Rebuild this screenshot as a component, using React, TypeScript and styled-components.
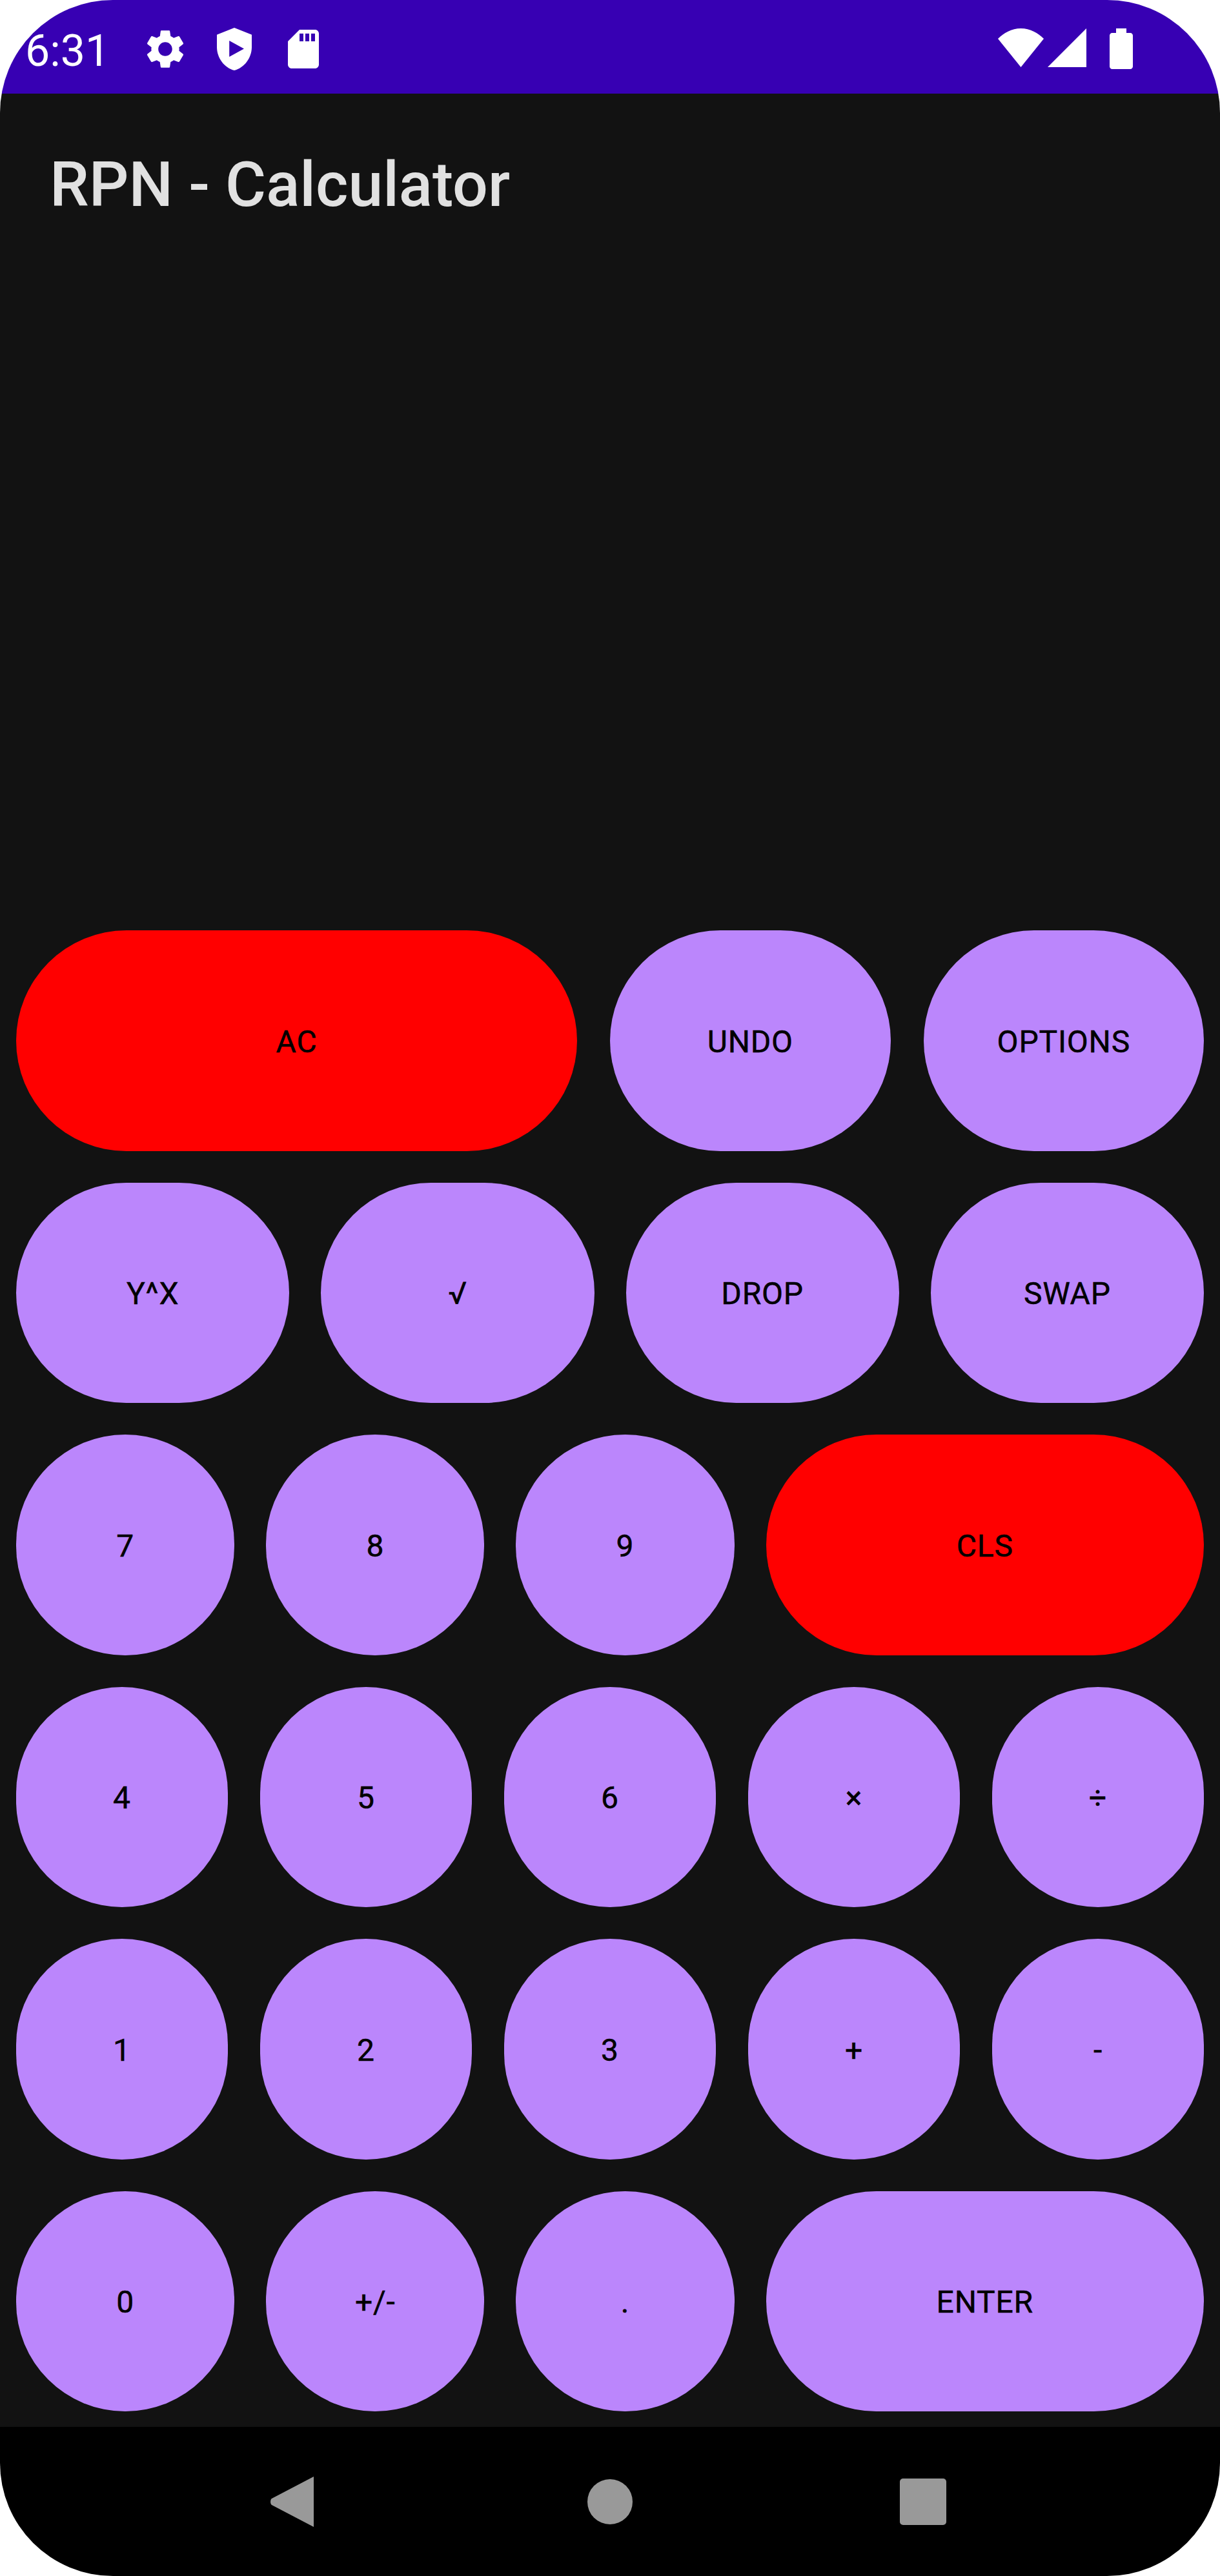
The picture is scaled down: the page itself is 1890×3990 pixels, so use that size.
import styled, { createGlobalStyle } from "styled-components";

type Key = {
  label: string;
  span?: number;
  danger?: boolean;
};

type Row = {
  gap: number;
  keys: Key[];
};

const ROWS: Row[] = [
  {
    gap: 51,
    keys: [{ label: "AC", span: 2, danger: true }, { label: "UNDO" }, { label: "OPTIONS" }],
  },
  {
    gap: 49,
    keys: [{ label: "Y^X" }, { label: "√" }, { label: "DROP" }, { label: "SWAP" }],
  },
  {
    gap: 49,
    keys: [{ label: "7" }, { label: "8" }, { label: "9" }, { label: "CLS", span: 2.006, danger: true }],
  },
  {
    gap: 50,
    keys: [{ label: "4" }, { label: "5" }, { label: "6" }, { label: "×" }, { label: "÷" }],
  },
  {
    gap: 50,
    keys: [{ label: "1" }, { label: "2" }, { label: "3" }, { label: "+" }, { label: "-" }],
  },
  {
    gap: 49,
    keys: [{ label: "0" }, { label: "+/-" }, { label: "." }, { label: "ENTER", span: 2.006 }],
  },
];

function App() {
  return (
    <Screen>
      <GlobalStyle />
      <StatusBar>
        <StatusLeft>
          <Clock>6:31</Clock>
          <NotificationIcons>
            <svg width="72" height="72" viewBox="0 0 24 24" fill="#fff">
              <path d="M19.14 12.94c.04-.3.06-.61.06-.94 0-.32-.02-.64-.07-.94l2.03-1.58c.18-.14.23-.41.12-.61l-1.92-3.32c-.12-.22-.37-.29-.59-.22l-2.39.96c-.5-.38-1.03-.7-1.62-.94l-.36-2.54c-.04-.24-.24-.41-.48-.41h-3.84c-.24 0-.43.17-.47.41l-.36 2.54c-.59.24-1.13.57-1.62.94l-2.39-.96c-.22-.08-.47 0-.59.22L2.74 8.87c-.12.21-.08.47.12.61l2.03 1.58c-.05.3-.09.63-.09.94s.02.64.07.94l-2.03 1.58c-.18.14-.23.41-.12.61l1.92 3.32c.12.22.37.29.59.22l2.39-.96c.5.38 1.03.7 1.62.94l.36 2.54c.05.24.24.41.48.41h3.84c.24 0 .44-.17.47-.41l.36-2.54c.59-.24 1.13-.56 1.62-.94l2.39.96c.22.08.47 0 .59-.22l1.92-3.32c.12-.22.07-.47-.12-.61l-2.01-1.58zM12 15.6c-1.98 0-3.6-1.62-3.6-3.6s1.62-3.6 3.6-3.6 3.6 1.62 3.6 3.6-1.62 3.6-3.6 3.6z" />
            </svg>
            <svg width="72" height="72" viewBox="0 0 24 24" fill="#fff">
              <path
                fillRule="evenodd"
                d="M12 1L3 4.600V11c0 5.550 3.840 10.740 9 12 5.160-1.260 9-6.450 9-12V4.600L12 1zM9.400 7.700V16L17 11.850 9.400 7.700z"
              />
            </svg>
            <svg width="72" height="72" viewBox="0 0 24 24" fill="#fff">
              <path d="M18 2h-8L4.020 8 4 20c0 1.100.9 2 2 2h12c1.100 0 2-.9 2-2V4c0-1.100-.9-2-2-2zm-6 6h-2V4h2v4zm3 0h-2V4h2v4zm3 0h-2V4h2v4z" />
            </svg>
          </NotificationIcons>
        </StatusLeft>
        <StatusRight>
          <svg width="71" height="60" viewBox="0 0 71 60" fill="#fff">
            <path d="M35.500 60L71 16C62 7 50 0 35.500 0S9 7 0 16z" />
          </svg>
          <SignalIcon width="60" height="60" viewBox="0 0 60 60" fill="#fff">
            <path d="M60 0v60H0z" />
          </SignalIcon>
          <BatteryIcon width="36" height="63" viewBox="0 0 36 63" fill="#fff">
            <path d="M10 0h16v7h6c2.200 0 4 1.800 4 4v48c0 2.200-1.800 4-4 4H4c-2.200 0-4-1.800-4-4V11c0-2.200 1.800-4 4-4h6z" />
          </BatteryIcon>
        </StatusRight>
      </StatusBar>
      <Main>
        <Title>RPN - Calculator</Title>
        <Keypad>
          {ROWS.map((row, i) => (
            <KeyRow key={i} $gap={row.gap}>
              {row.keys.map((k) => (
                <KeyButton key={k.label} $span={k.span ?? 1} $danger={k.danger}>
                  {k.label}
                </KeyButton>
              ))}
            </KeyRow>
          ))}
        </Keypad>
      </Main>
      <NavBar>
        <svg width="67" height="78" viewBox="0 0 67 78" fill="#999">
          <path d="M67 0v78L2 44c-2.600-1.500-2.600-8.500 0-10z" />
        </svg>
        <HomeDot />
        <RecentSquare />
      </NavBar>
    </Screen>
  );
}

export default App;

const GlobalStyle = createGlobalStyle`
  html, body {
    margin: 0;
    padding: 0;
    background: #fff;
  }
`;

const Screen = styled.div`
  width: 1890px;
  height: 3990px;
  display: flex;
  flex-direction: column;
  border-radius: 175px;
  overflow: hidden;
  font-family: Roboto, "Liberation Sans", sans-serif;
`;

const StatusBar = styled.header`
  flex: none;
  height: 145px;
  box-sizing: border-box;
  padding: 0 135px 0 39px;
  background: #3700b3;
  display: flex;
  justify-content: space-between;
  align-items: flex-start;
`;

const StatusLeft = styled.div`
  display: flex;
  align-items: center;
  height: 152px;
`;

const Clock = styled.span`
  width: 181px;
  padding-top: 6px;
  font-size: 68px;
  color: #fff;
  line-height: 72px;
`;

const NotificationIcons = styled.div`
  display: flex;
  gap: 35px;
`;

const StatusRight = styled.div`
  display: flex;
  align-items: flex-start;
  padding-top: 44px;
`;

const SignalIcon = styled.svg`
  margin-left: 6px;
`;

const BatteryIcon = styled.svg`
  margin-left: 36px;
`;

const Main = styled.main`
  flex: 1;
  background: #121212;
  display: flex;
  flex-direction: column;
  justify-content: space-between;
  padding: 0 25px 24px;
`;

const Title = styled.h1`
  margin: 85px 0 0 52px;
  font-size: 96.700px;
  font-weight: 500;
  line-height: 112px;
  color: #e1e1e1;
`;

const Keypad = styled.div`
  display: flex;
  flex-direction: column;
  gap: 49px;
`;

const KeyRow = styled.div<{ $gap: number }>`
  display: flex;
  gap: ${(p) => p.$gap}px;
`;

const KeyButton = styled.button<{ $span: number; $danger?: boolean }>`
  flex: ${(p) => p.$span} 1 0;
  min-width: 0;
  height: 341.500px;
  padding: 3px 0 0;
  border: none;
  border-radius: 171px;
  background: ${(p) => (p.$danger ? "#ff0000" : "#bb86fc")};
  color: #000;
  font-family: Roboto, "Liberation Sans", sans-serif;
  font-size: 48px;
  font-weight: 400;
  letter-spacing: 0.8px;
  -webkit-text-stroke: 0.5px #000;
`;

const NavBar = styled.nav`
  flex: none;
  height: 231px;
  box-sizing: border-box;
  padding-right: 5px;
  background: #000;
  display: flex;
  justify-content: center;
  align-items: center;
`;

const HomeDot = styled.div`
  width: 70px;
  height: 70px;
  margin-left: 424px;
  border-radius: 50%;
  background: #999;
`;

const RecentSquare = styled.div`
  width: 72px;
  height: 72px;
  margin-left: 414px;
  border-radius: 5px;
  background: #999;
`;
